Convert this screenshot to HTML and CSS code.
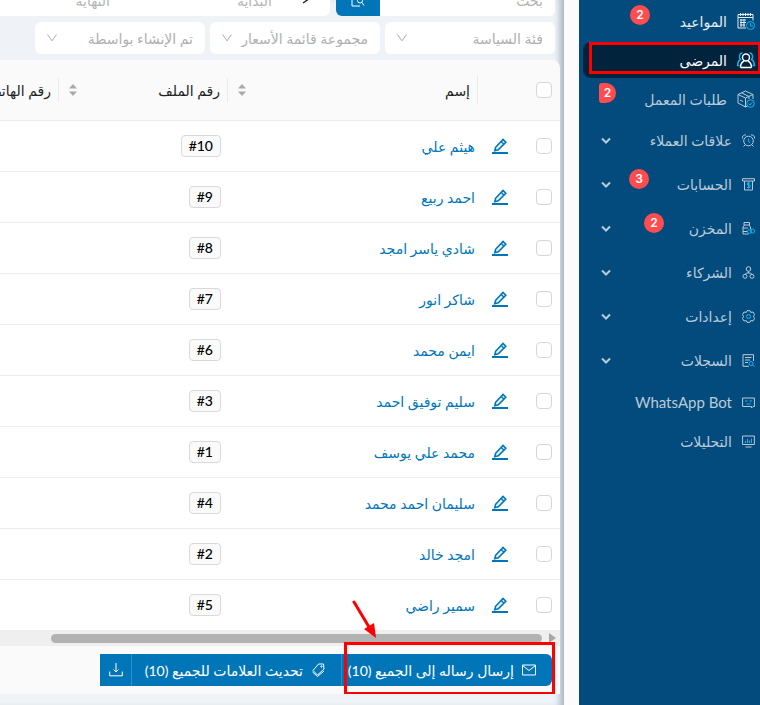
FILE: index.html
```html
<!DOCTYPE html>
<html lang="ar" dir="rtl">

<head>
    <meta charset="utf-8" />
    <meta name="viewport" content="width=device-width, initial-scale=1.0">
    <title>المرضى</title>
    <link rel="stylesheet" href="styles.css">
</head>

<body>
    <svg class="sprite" aria-hidden="true">
        <symbol id="edit" viewBox="0 0 16 16">
            <path d="M2.800 12.700 3.600 9.300 11 1.500 13.800 4.300 6.300 11.800Z" fill="#e3f1fa" stroke="currentColor" stroke-width="1.600" />
            <path d="M9.300 3.600 11.700 6" stroke="currentColor" stroke-width="1.400" />
            <path d="M0 15h16" stroke="currentColor" stroke-width="2" />
        </symbol>
        <symbol id="down" viewBox="0 0 10 8">
            <path d="M1 1.500 5 5.500 9 1.500" fill="none" stroke="currentColor" stroke-width="2" />
        </symbol>
        <symbol id="arrow" viewBox="0 0 10 8">
            <path d="M0.500 0.500 5 6.800 9.500 0.500" fill="none" stroke="currentColor" stroke-width="1" />
        </symbol>
        <symbol id="sorter" viewBox="0 0 8 14">
            <path d="M0 5.500 4 1 8 5.500Z M0 8.500 4 13 8 8.500Z" fill="currentColor" />
        </symbol>
    </svg>

    <aside class="sidebar">
        <nav class="menu">
            <a class="item bright" href="#">
                <svg class="icon" viewBox="0 0 18 18"><path d="M9 16H1V2.500h15v6M1 5.500h15M3.500 1v3M6 1v3M8.500 1v3M11 1v3M13.500 1v3M3 8h6M3 10.500h6M3 13h5M4 7v8M7 7v8" /><g class="blue"><circle cx="13.500" cy="13.500" r="4" /><path d="M13.500 11v3H16" /></g></svg>
                <span>المواعيد</span>
                <b class="badge b1">2</b>
            </a>
            <a class="item active" href="#">
                <svg class="icon" viewBox="0 0 18 18"><g class="blue"><path d="M5.500 2C2.500 1.500 1.500 6.500 3.500 8.500 1.500 9.500.7 11.500.7 14.500H2.500M12.500 2c3-.5 4 4.500 2 6.500 2 1 2.800 3 2.800 6H15.500" /></g><circle cx="9" cy="6.500" r="3.500" /><path d="M3.500 16.500c0-4 1.500-5.500 3.500-6.500M14.500 16.500c0-4-1.500-5.500-3.500-6.500M3.500 16.500h11" /></svg>
                <span>المرضى</span>
                <i class="mark"></i>
            </a>
            <a class="item" href="#">
                <svg class="icon" viewBox="0 0 18 18"><path d="M16 9V4.500L8.500 1 1 4.500V13l7.500 4 2-1M1 4.500 8.500 8 16 4.500M8.500 8v9M4.500 2.800 12 6.500V9M3 10l3 1.500" /><g class="blue"><circle cx="13.500" cy="13.500" r="3.800" /><path d="M11.700 13.500 13 15l2.300-2.700" /></g></svg>
                <span>طلبات المعمل</span>
                <b class="badge b2">2</b>
            </a>
            <a class="item group" href="#">
                <svg class="icon" viewBox="0 0 13 13"><circle cx="6.500" cy="7" r="4.800" /><path d="M.5 4.500C0 2 2 .5 4 1M12.500 4.500C13 2 11 .5 9 1M3 11 1.500 12.500M10 11l1.500 1.500" /><path class="blue" d="M6.500 4.500V7l1.500 2" /></svg>
                <span>علاقات العملاء</span>
                <svg class="open"><use href="#down" /></svg>
            </a>
            <a class="item group" href="#">
                <svg class="icon" viewBox="0 0 13 13"><path d="M.5 3V.7h12V3h-2v9h-8V3h-2M2.500 3h8" /><path class="blue" d="M8 5H5.500v2H8v2.500H5M6.500 4v6.500" /></svg>
                <span>الحسابات</span>
                <svg class="open"><use href="#down" /></svg>
                <b class="badge b3">3</b>
            </a>
            <a class="item group" href="#">
                <svg class="icon" viewBox="0 0 13 13"><path d="M2 .5h5.500V3H2ZM2.500 3 1 5v7h5.500M7 3l1.500 2v2M1 6h5M1 9.500h4.500" /><g class="blue"><circle cx="7.500" cy="9.500" r="2" /><circle cx="10.500" cy="9" r="2" /></g></svg>
                <span>المخزن</span>
                <svg class="open"><use href="#down" /></svg>
                <b class="badge b4">2</b>
            </a>
            <a class="item group" href="#">
                <svg class="icon" viewBox="0 0 13 13"><circle cx="6.500" cy="3" r="2.300" /><path d="M6.500 5.500v1.500M3 8.500 4.500 7h4L10 8.500" /><circle cx="3" cy="10.300" r="2" /><circle cx="10" cy="10.300" r="2" /></svg>
                <span>الشركاء</span>
                <svg class="open"><use href="#down" /></svg>
            </a>
            <a class="item group" href="#">
                <svg class="icon" viewBox="0 0 13 13"><path d="M5 .7h3L8.700 2.400 11 2l1.500 2.500-1 2 1 2L11 11l-2.300-.4L8 12.300H5L4.300 10.600 2 11 .5 8.500l1-2-1-2L2 2l2.300.4Z" /><circle class="blue" cx="6.500" cy="6.500" r="2" /></svg>
                <span>إعدادات</span>
                <svg class="open"><use href="#down" /></svg>
            </a>
            <a class="item group" href="#">
                <svg class="icon" viewBox="0 0 13 13"><path d="M7 12.300H1V.7h10.500V7M3 3.500h6.500M3 6h5M3 8.500h3" /><g class="blue"><circle cx="9" cy="9.500" r="2" /><path d="m10.500 11 2 1.500" /></g></svg>
                <span>السجلات</span>
                <svg class="open"><use href="#down" /></svg>
            </a>
            <a class="item small" href="#">
                <svg class="icon" viewBox="0 0 13 13"><path d="M.6 2h11.800v8.500H11L9.500 12V10.500H.6Z" /><path class="blue" d="M3 5h2.500M7.500 5H10M4.500 8h4" /></svg>
                <span class="latin">WhatsApp Bot</span>
            </a>
            <a class="item small" href="#">
                <svg class="icon" viewBox="0 0 13 13"><path d="M.6 1h11.800v8.500H.6ZM3.500 12h6" /><path class="blue" d="M3.500 8V6M5.500 8V4M7.500 8V5.500M9.500 8V3.500" /></svg>
                <span>التحليلات</span>
            </a>
        </nav>
    </aside>

    <main class="main">
        <div class="filters top">
            <div class="search">
                <input type="text" class="field" placeholder="بحث" aria-label="بحث">
                <button class="searchBtn" aria-label="بحث">
                    <svg viewBox="0 0 14 14" width="14" height="14"><path d="M1 1v11h8M1 1h3" /><circle cx="9" cy="6.500" r="2.500" /><path d="m11 8.500 2 3" /></svg>
                </button>
            </div>
            <div class="dates">
                <svg class="range" viewBox="0 0 12 8"><path d="M1 7 11 0" /></svg>
                <input type="text" placeholder="البداية" aria-label="البداية">
                <input type="text" placeholder="النهاية" aria-label="النهاية">
            </div>
        </div>
        <div class="filters">
            <div class="select">
                <select aria-label="فئة السياسة"><option>فئة السياسة</option></select>
                <svg><use href="#arrow" /></svg>
            </div>
            <div class="select">
                <select aria-label="مجموعة قائمة الأسعار"><option>مجموعة قائمة الأسعار</option></select>
                <svg><use href="#arrow" /></svg>
            </div>
            <div class="select">
                <select aria-label="تم الإنشاء بواسطة"><option>تم الإنشاء بواسطة</option></select>
                <svg><use href="#arrow" /></svg>
            </div>
        </div>

        <section class="card">
            <table class="patients">
                <colgroup>
                    <col class="colCheck">
                    <col class="colEdit">
                    <col class="colName">
                    <col class="colFile">
                    <col>
                </colgroup>
                <thead>
                    <tr>
                        <th><input type="checkbox" aria-label="الكل"></th>
                        <th></th>
                        <th class="split tall"><div class="head">إسم<svg><use href="#sorter" /></svg></div></th>
                        <th class="split"><div class="head">رقم الملف<svg><use href="#sorter" /></svg></div></th>
                        <th class="split"><div class="head">رقم الهاتف</div></th>
                    </tr>
                </thead>
                <tbody>
                    <tr>
                        <td><input type="checkbox" aria-label="هيثم علي"></td>
                        <td><button class="edit" aria-label="تعديل"><svg><use href="#edit" /></svg></button></td>
                        <td><a href="#">هيثم علي</a></td>
                        <td><span class="tag" dir="ltr">#10</span></td>
                        <td></td>
                    </tr>
                    <tr>
                        <td><input type="checkbox" aria-label="احمد ربيع"></td>
                        <td><button class="edit" aria-label="تعديل"><svg><use href="#edit" /></svg></button></td>
                        <td><a href="#">احمد ربيع</a></td>
                        <td><span class="tag" dir="ltr">#9</span></td>
                        <td></td>
                    </tr>
                    <tr>
                        <td><input type="checkbox" aria-label="شادي ياسر امجد"></td>
                        <td><button class="edit" aria-label="تعديل"><svg><use href="#edit" /></svg></button></td>
                        <td><a href="#">شادي ياسر امجد</a></td>
                        <td><span class="tag" dir="ltr">#8</span></td>
                        <td></td>
                    </tr>
                    <tr>
                        <td><input type="checkbox" aria-label="شاكر انور"></td>
                        <td><button class="edit" aria-label="تعديل"><svg><use href="#edit" /></svg></button></td>
                        <td><a href="#">شاكر انور</a></td>
                        <td><span class="tag" dir="ltr">#7</span></td>
                        <td></td>
                    </tr>
                    <tr>
                        <td><input type="checkbox" aria-label="ايمن محمد"></td>
                        <td><button class="edit" aria-label="تعديل"><svg><use href="#edit" /></svg></button></td>
                        <td><a href="#">ايمن محمد</a></td>
                        <td><span class="tag" dir="ltr">#6</span></td>
                        <td></td>
                    </tr>
                    <tr>
                        <td><input type="checkbox" aria-label="سليم توفيق احمد"></td>
                        <td><button class="edit" aria-label="تعديل"><svg><use href="#edit" /></svg></button></td>
                        <td><a href="#">سليم توفيق احمد</a></td>
                        <td><span class="tag" dir="ltr">#3</span></td>
                        <td></td>
                    </tr>
                    <tr>
                        <td><input type="checkbox" aria-label="محمد علي يوسف"></td>
                        <td><button class="edit" aria-label="تعديل"><svg><use href="#edit" /></svg></button></td>
                        <td><a href="#">محمد علي يوسف</a></td>
                        <td><span class="tag" dir="ltr">#1</span></td>
                        <td></td>
                    </tr>
                    <tr>
                        <td><input type="checkbox" aria-label="سليمان احمد محمد"></td>
                        <td><button class="edit" aria-label="تعديل"><svg><use href="#edit" /></svg></button></td>
                        <td><a href="#">سليمان احمد محمد</a></td>
                        <td><span class="tag" dir="ltr">#4</span></td>
                        <td></td>
                    </tr>
                    <tr>
                        <td><input type="checkbox" aria-label="امجد خالد"></td>
                        <td><button class="edit" aria-label="تعديل"><svg><use href="#edit" /></svg></button></td>
                        <td><a href="#">امجد خالد</a></td>
                        <td><span class="tag" dir="ltr">#2</span></td>
                        <td></td>
                    </tr>
                    <tr>
                        <td><input type="checkbox" aria-label="سمير راضي"></td>
                        <td><button class="edit" aria-label="تعديل"><svg><use href="#edit" /></svg></button></td>
                        <td><a href="#">سمير راضي</a></td>
                        <td><span class="tag" dir="ltr">#5</span></td>
                        <td></td>
                    </tr>
                </tbody>
            </table>
            <div class="scrollbar">
                <svg viewBox="0 0 8 10" width="8" height="10"><path d="M1 0 8 5 1 10Z" fill="#a8a8a8" /></svg>
                <div class="thumb"></div>
            </div>
            <div class="actions">
                <button class="send">
                    <svg viewBox="0 0 14 14"><path d="M.5 2h13v10H.5ZM.5 2.500 7 7.500l6.500-5" /></svg>
                    إرسال رساله إلى الجميع (10)
                </button>
                <button class="tags">
                    <svg viewBox="0 0 14 14"><path d="M7.500 1h5l.5 5-6.500 6L2 7.500ZM1.500 9 6.500 13.500 13 8" /><circle cx="10.500" cy="3.500" r=".7" /></svg>
                    تحديث العلامات للجميع (10)
                </button>
                <button class="export" aria-label="تصدير">
                    <svg viewBox="0 0 14 14"><path d="M7 0v8.500M4.500 6.500 7 9l2.500-2.500M.7 8.500v4.300h12.600V8.500" /></svg>
                </button>
                <i class="mark"></i>
                <svg class="pointer" viewBox="0 0 26 40"><path d="M2 2 17 27" stroke="#f00" stroke-width="3" stroke-linecap="round" /><path d="M24 38 12 29 22 23Z" fill="#f00" /></svg>
            </div>
        </section>
    </main>
</body>

</html>
```
FILE: styles.css
```css
* {
    box-sizing: border-box;
}

body {
    margin: 0;
    display: flex;
    min-height: 100vh;
    background-color: #fcfcfc;
    font-family: Lato, "DejaVu Sans", sans-serif;
    font-size: 14px;
    color: #222;
}

a {
    color: #0076b9;
    text-decoration: none;
}

button,
input,
select {
    font-family: inherit;
    font-size: inherit;
    margin: 0;
    border: none;
}

button {
    padding: 0;
    cursor: pointer;
}

svg {
    flex: none;
    fill: none;
    stroke-width: 1;
}

.sprite {
    position: absolute;
    width: 0;
    height: 0;
}

/* sidebar */
.sidebar {
    flex: none;
    width: 181px;
    background-color: #044b7d;
}

.menu {
    display: flex;
    flex-direction: column;
    gap: 3px;
    padding: 3px 0 3px 4px;
}

.item {
    position: relative;
    display: flex;
    align-items: center;
    gap: 10px;
    height: 36px;
    padding: 0 5px 0 18px;
    color: #b9cad8;
    white-space: nowrap;
}

.item .icon {
    width: 18px;
    height: 18px;
    stroke: currentColor;
}

.item .blue {
    stroke: #12b5f4;
}

.group {
    height: 41px;
}

.group .icon,
.small .icon {
    width: 13px;
    height: 13px;
}

.latin {
    font-size: 15px;
}

.bright {
    color: #e6edf2;
}

.active {
    color: #fff;
    background-color: #02233c;
    border-radius: 8px 0 0 8px;
}

.active .icon {
    stroke-width: 1.4;
}

.open {
    width: 10px;
    height: 8px;
    margin-right: auto;
}

.badge {
    position: absolute;
    width: 20px;
    height: 20px;
    border-radius: 10px;
    background-color: #ff4d4f;
    color: #fff;
    font: 600 12px/20px Inter, sans-serif;
    text-align: center;
}

.b1 {
    left: 47px;
    top: 2px;
}

.b2 {
    left: 16px;
    top: 2px;
    width: 17px;
    border-radius: 3px 10px 10px 3px;
}

.b3 {
    left: 46px;
    top: 5px;
}

.b4 {
    left: 61px;
    top: 5px;
}

.mark {
    position: absolute;
    border: 3px solid #f00;
}

.active .mark {
    left: 6px;
    right: -1px;
    top: 0;
    bottom: 4px;
}

/* main */
.main {
    flex: 1;
    min-width: 0;
    margin-right: 15px;
    background-color: #eff3f8;
    overflow: hidden;
    box-shadow: inset -8px 0 6px -4px #a9b5c0;
}

.filters {
    display: flex;
    gap: 5px;
    padding: 6px 9px;
}

.top {
    gap: 6px;
    height: 16px;
    padding: 0 9px 0 0;
    align-items: flex-end;
    overflow: hidden;
}

.search {
    display: flex;
    flex: none;
    width: 219px;
}

.field {
    flex: 1;
    min-width: 0;
    height: 32px;
    padding: 0 12px;
    background-color: #fff;
    border-radius: 0 6px 6px 0;
}

::placeholder {
    color: #b5b5b5;
    opacity: 1;
}

.searchBtn {
    width: 44px;
    height: 32px;
    padding-top: 4px;
    background-color: #0076b9;
    border-radius: 0 0 0 6px;
}

.searchBtn svg {
    stroke: #fff;
}

.dates {
    display: flex;
    flex: 1;
    align-items: center;
    height: 32px;
    background-color: #fff;
    border-radius: 0 6px 6px 0;
}

.dates input {
    width: 162px;
    padding: 0 30px 0 0;
    background: none;
}

.dates .range {
    width: 12px;
    height: 8px;
    margin-right: 16px;
    stroke: #222;
    stroke-width: 1.4;
}

.select {
    position: relative;
    width: 170px;
}

.select select {
    appearance: none;
    width: 100%;
    height: 32px;
    padding: 0 12px;
    border-radius: 6px;
    background-color: #fff;
    color: #b0b0b0;
}

.select svg {
    position: absolute;
    left: 12px;
    top: 12px;
    width: 10px;
    height: 8px;
    color: #aaa;
}

.card {
    margin-right: 4px;
    border-radius: 0 8px 0 0;
    background-color: #fafafa;
    overflow: hidden;
}

.patients {
    width: 100%;
    table-layout: fixed;
    border-collapse: separate;
    border-spacing: 0;
}

.colCheck {
    width: 32px;
}

.colEdit {
    width: 50px;
}

.colName {
    width: 250px;
}

.colFile {
    width: 169px;
}

th {
    height: 61px;
    padding: 0 8px;
    border-bottom: 1px solid #ececec;
    font-weight: normal;
    text-align: right;
    white-space: nowrap;
}

td {
    height: 51px;
    padding: 0 8px 0 0;
    background-color: #fff;
    border-bottom: 1px solid #ececec;
    white-space: nowrap;
}

tr:last-child td {
    height: 50px;
    border-bottom: none;
}

td:nth-child(2) {
    padding-right: 20px;
}

td:nth-child(3) {
    padding-right: 3px;
}

td:nth-child(4) {
    padding-right: 7px;
}

/* short line between the header cells */
.split {
    background: linear-gradient(#ececec, #ececec) right center / 1px 24px no-repeat;
}

.tall {
    background-size: 1px 30px;
}

.head {
    display: flex;
    align-items: center;
    justify-content: space-between;
}

.head svg {
    width: 8px;
    height: 14px;
    margin-left: 2px;
    color: #aaa;
}

th input[type="checkbox"],
td input[type="checkbox"] {
    appearance: none;
    display: block;
    width: 16px;
    height: 16px;
    background-color: #fff;
    border: 1px solid #d6d6d6;
    border-radius: 4px;
}

.edit {
    display: block;
    background: none;
    color: #0076b9;
}

.edit svg {
    display: block;
    width: 16px;
    height: 16px;
}

.tag {
    display: inline-block;
    padding: 0 7px;
    line-height: 20px;
    background-color: #fafafa;
    border: 1px solid #d9d9d9;
    border-radius: 4px;
    color: #000;
    font-weight: 500;
}

.scrollbar {
    display: flex;
    align-items: center;
    gap: 6px;
    height: 16px;
    padding: 0 4px 0 51px;
    background-color: #efefef;
}

.thumb {
    flex: 1;
    height: 9px;
    border-radius: 5px;
    background-color: #b2b2b2;
}

.actions {
    position: relative;
    display: flex;
    padding: 8px;
}

.actions button {
    display: flex;
    align-items: center;
    gap: 8px;
    height: 32px;
    padding-right: 16px;
    background-color: #0076b9;
    color: #fff;
    border-left: 1px solid #2b91cb;
    white-space: nowrap;
}

.actions button svg {
    width: 14px;
    height: 14px;
    stroke: #fff;
}

.actions .send {
    width: 211px;
    border-radius: 0 6px 6px 0;
}

.actions .tags {
    width: 210px;
}

.actions .export {
    width: 31px;
    padding-right: 8px;
    border-left: none;
}

.actions .mark {
    right: 5px;
    top: -4px;
    width: 211px;
    height: 53px;
}

.pointer {
    position: absolute;
    right: 182px;
    top: -46px;
    width: 26px;
    height: 40px;
}
```
